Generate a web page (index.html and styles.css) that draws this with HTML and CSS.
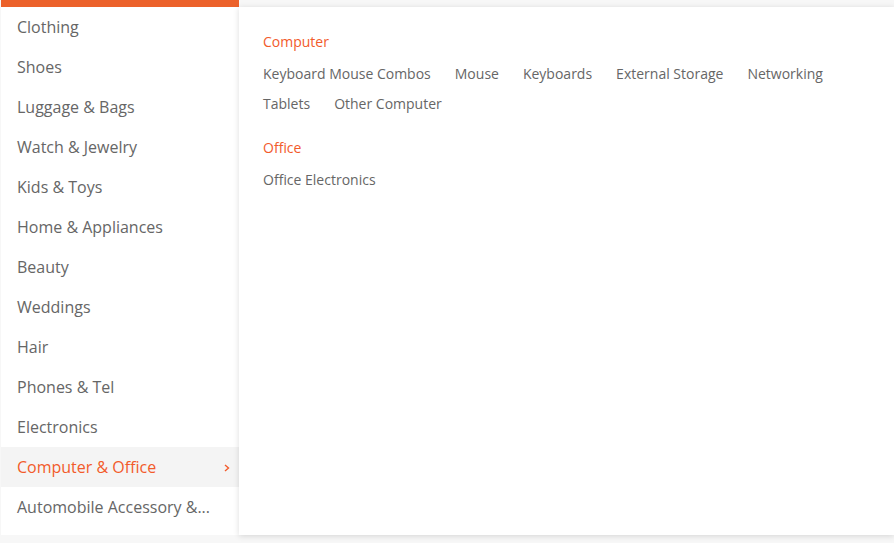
FILE: index.html
```html
<!DOCTYPE html>
<html>
<head>
<meta charset="utf-8">
<link rel="stylesheet" href="styles.css">
</head>
<body>
<div class="wrap">
  <ul class="sidebar">
    <li class="cat">Clothing</li>
    <li class="cat">Shoes</li>
    <li class="cat">Luggage &amp; Bags</li>
    <li class="cat">Watch &amp; Jewelry</li>
    <li class="cat">Kids &amp; Toys</li>
    <li class="cat">Home &amp; Appliances</li>
    <li class="cat">Beauty</li>
    <li class="cat">Weddings</li>
    <li class="cat">Hair</li>
    <li class="cat">Phones &amp; Tel</li>
    <li class="cat">Electronics</li>
    <li class="cat active">Computer &amp; Office
      <svg class="chev" width="6" height="8" viewBox="0 0 6 8"><path d="M1 1 L4.5 4 L1 7" fill="none" stroke="currentColor" stroke-width="1.4"/></svg>
    </li>
    <li class="cat">Automobile Accessory &amp;...</li>
  </ul>
  <div class="panel">
    <div class="group">
      <div class="group-title">Computer</div>
      <div class="links">
        <span class="link">Keyboard Mouse Combos</span>
        <span class="link">Mouse</span>
        <span class="link">Keyboards</span>
        <span class="link">External Storage</span>
        <span class="link">Networking</span>
        <span class="link">Tablets</span>
        <span class="link">Other Computer</span>
      </div>
    </div>
    <div class="group">
      <div class="group-title">Office</div>
      <div class="links">
        <span class="link">Office Electronics</span>
      </div>
    </div>
  </div>
</div>
</body>
</html>
```
FILE: styles.css
```css
html, body {
  margin: 0;
  padding: 0;
  background: #f7f7f7;
  font-family: "Open Sans", "DejaVu Sans", sans-serif;
}
.wrap {
  display: flex;
  align-items: flex-start;
  width: 894px;
  height: 543px;
  overflow: hidden;
}
.sidebar {
  list-style: none;
  margin: 0 0 0 1px;
  padding: 0 0 8px 0;
  width: 238px;
  flex: none;
  background: #fff;
  border-top: 7px solid #ec612a;
}
.cat {
  display: flex;
  align-items: center;
  justify-content: space-between;
  height: 40px;
  padding: 0 9px 0 16px;
  font-size: 16px;
  color: #666;
}
.cat.active {
  background: #f4f4f4;
  color: #f25b2b;
}
.chev {
  display: block;
  margin-top: 2px;
}
.panel {
  flex: 1;
  margin-top: 7px;
  height: 528px;
  box-sizing: border-box;
  background: #fff;
  box-shadow: 0 1px 6px rgba(0,0,0,0.14);
  padding: 25px 24px 0 24px;
  position: relative;
  z-index: 1;
}
.group + .group {
  margin-top: 19px;
}
.group-title {
  font-size: 14px;
  line-height: 20px;
  color: #f25b2b;
  margin-bottom: 7px;
}
.links {
  display: flex;
  flex-wrap: wrap;
  column-gap: 24px;
  max-width: 590px;
}
.link {
  font-size: 14px;
  line-height: 30px;
  color: #666;
  white-space: nowrap;
}
```
